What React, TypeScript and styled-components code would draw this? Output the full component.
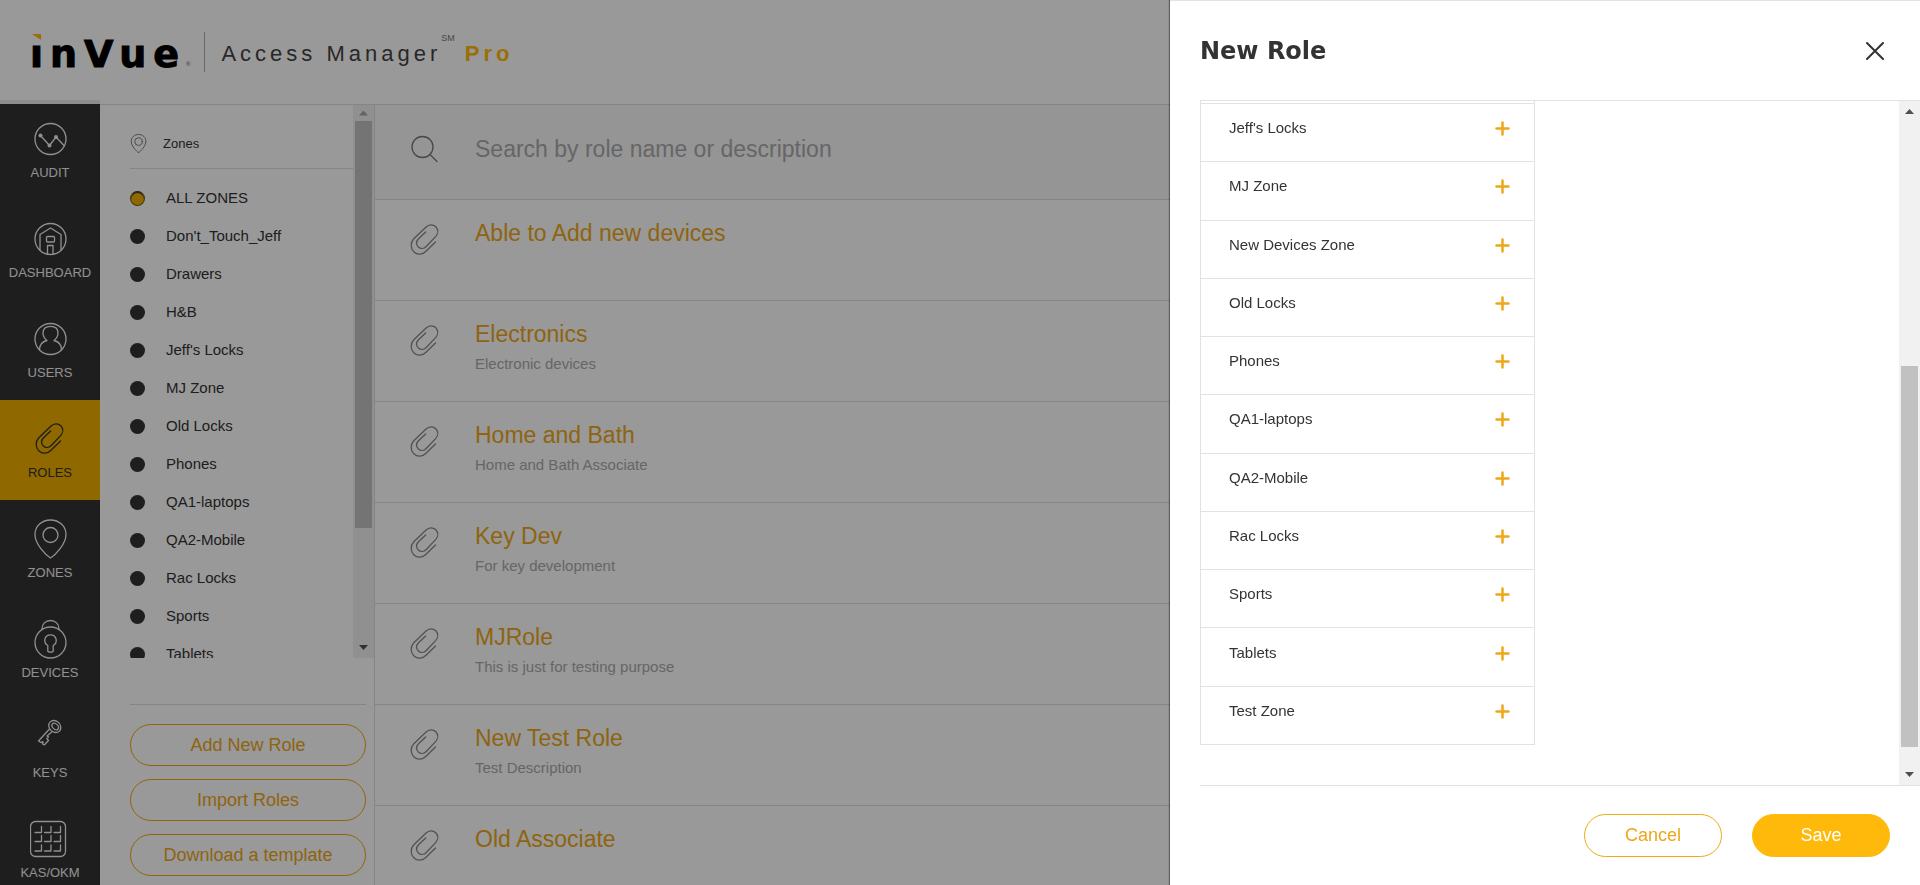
import React from "react";
import styled, { createGlobalStyle, css } from "styled-components";

const GlobalStyle = createGlobalStyle`
  *, *::before, *::after { box-sizing: border-box; }
  html, body, #root { height: 100%; }
  body {
    margin: 0;
    overflow: hidden;
    background: #fff;
    color: #333;
    font-family: "Liberation Sans", Arial, sans-serif;
    font-size: 15px;
  }
  button, input { font-family: inherit; }
  h1, h2, p, ul { margin: 0; padding: 0; }
  ul { list-style: none; }
`;

const GOLD = "#eda719";
const LINE = "#dedede";

/* ---------- page shell ---------- */

const Page = styled.div`
  display: flex;
  flex-direction: column;
  height: 100vh;
`;

const Header = styled.header`
  display: flex;
  align-items: center;
  flex: none;
  height: 104px;
  padding: 0 30px;
  background: linear-gradient(#ebebeb, #ebebeb) left bottom / 100px 4px no-repeat #fff;
`;

const Logo = styled.div`
  display: flex;
  align-items: flex-end;
`;

const Wordmark = styled.div`
  position: relative;
  padding-top: 4px;
  color: #000;
  font: bold 38px/40px "DejaVu Sans", sans-serif;
  letter-spacing: 7px;
  -webkit-text-stroke: 1px #000;

  &::before {
    content: "";
    position: absolute;
    top: 4px;
    left: 2px;
    border-style: solid;
    border-width: 0 9px 6px 0;
    border-color: transparent #ffb90a transparent transparent;
  }
`;

const Registered = styled.span`
  padding-bottom: 6px;
  color: #555;
  font-size: 6px;
  line-height: 8px;
`;

const Divider = styled.div`
  width: 1px;
  height: 40px;
  margin: 0 16px 0 14px;
  background: #aaa;
`;

const Product = styled.div`
  display: flex;
  align-items: flex-start;
  padding-top: 4px;
  color: #444;
  font-size: 22px;
  line-height: 28px;
  letter-spacing: 4px;
`;

const ServiceMark = styled.sup`
  margin: -6px 10px 0 0;
  color: #777;
  font-size: 9px;
  line-height: 8px;
  letter-spacing: 0;
`;

const Pro = styled.b`
  color: #ffb90a;
`;

const Columns = styled.div`
  display: flex;
  flex: 1;
  min-height: 0;
`;

/* ---------- main navigation ---------- */

const Nav = styled.nav`
  flex: none;
  width: 100px;
  overflow: hidden;
  background: #333;
`;

const NavItem = styled.a<{ $active?: boolean }>`
  display: flex;
  flex-direction: column;
  align-items: center;
  justify-content: flex-end;
  gap: 6px;
  height: 100px;
  padding-bottom: 19px;
  color: ${(p) => (p.$active ? "#333" : "#f0f0f0")};
  background: ${(p) => (p.$active ? "#eead00" : "transparent")};
  font-size: 13px;
  line-height: 16px;
  text-decoration: none;

  &:first-child { height: 96px; }
`;

const Icon = styled.svg<{ $size?: number }>`
  flex: none;
  width: ${(p) => p.$size ?? 40}px;
  height: ${(p) => p.$size ?? 40}px;
  fill: none;
  stroke: currentColor;
  stroke-linecap: round;
  stroke-linejoin: round;
`;

/* ---------- zone filter ---------- */

const Sidebar = styled.aside`
  display: flex;
  flex-direction: column;
  flex: none;
  width: 275px;
  border-top: 1px solid ${LINE};
  border-right: 1px solid ${LINE};
`;

const ZoneScroll = styled.div`
  display: flex;
  flex: 1;
  min-height: 0;
  overflow: hidden;
`;

const ZonePane = styled.div`
  flex: 1;
  padding-left: 30px;
`;

const ZoneHeading = styled.h2`
  display: flex;
  align-items: center;
  gap: 14px;
  height: 64px;
  padding-top: 14px;
  border-bottom: 1px solid ${LINE};
  font-size: 13px;
  font-weight: normal;

  svg { color: #777; }
`;

const ZoneOptions = styled.div`
  padding-top: 10px;
`;

const ZoneLabel = styled.label`
  display: flex;
  align-items: center;
  gap: 21px;
  height: 38px;
`;

const ItemText = styled.span`
  padding-bottom: 2px;
`;

const ZoneRadio = styled.input`
  appearance: none;
  width: 15px;
  height: 15px;
  margin: 0;
  border-radius: 50%;
  background: #333;

  &:checked {
    background: #eead00;
    box-shadow: inset 0 1px 0 #333;
    border: 1px solid #7a5c10;
    border-top-color: #333;
  }
`;

const SidebarActions = styled.div`
  display: flex;
  flex-direction: column;
  flex: none;
  gap: 13px;
  margin: 46px 8px 0 30px;
  padding: 19px 0 9px;
  border-top: 1px solid ${LINE};
`;

const PillButton = styled.button<{ $filled?: boolean; $large?: boolean }>`
  height: 42px;
  border: 1px solid #edab10;
  border-radius: 21px;
  padding: 0;
  background: transparent;
  color: ${GOLD};
  font-size: 18px;
  line-height: 20px;

  ${(p) => p.$large && css`
    width: 138px;
    height: 43px;
    padding-bottom: 2px;
    border-radius: 22px;
  `}
  ${(p) => p.$filled && css`
    border-color: #ffb90a;
    background: #ffb90a;
    color: #fff;
  `}
`;

/* ---------- scroll bar ---------- */

const Track = styled.div`
  display: flex;
  flex-direction: column;
  align-items: center;
  flex: none;
  width: 21px;
  background: #f1f1f1;
`;

const ArrowBox = styled.div<{ $down?: boolean; $muted?: boolean; $short?: boolean }>`
  display: flex;
  align-items: center;
  flex: none;
  height: ${(p) => (p.$short ? 16 : 21)}px;

  &::before {
    content: "";
    width: 9px;
    height: 5px;
    background: ${(p) => (p.$muted ? "#a3a3a3" : "#505050")};
    clip-path: ${(p) =>
      p.$down ? "polygon(0 0, 100% 0, 50% 100%)" : "polygon(50% 0, 100% 100%, 0 100%)"};
  }
`;

const TrackPart = styled.div<{ $share: number; $thumb?: boolean }>`
  flex: ${(p) => p.$share} 1 0;
  width: 17px;
  background: ${(p) => (p.$thumb ? "#c1c1c1" : "transparent")};
`;

type ScrollBarProps = { before: number; thumb: number; after: number; atTop?: boolean };

const ScrollBar = ({ before, thumb, after, atTop }: ScrollBarProps) => (
  <Track aria-hidden="true">
    <ArrowBox $muted={atTop} $short={atTop} />
    <TrackPart $share={before} />
    <TrackPart $share={thumb} $thumb />
    <TrackPart $share={after} />
    <ArrowBox $down />
  </Track>
);

/* ---------- role list ---------- */

const Main = styled.main`
  flex: 1;
  min-width: 0;
  overflow: hidden;
  border-top: 1px solid ${LINE};
`;

const SearchRow = styled.label`
  display: flex;
  align-items: center;
  gap: 30px;
  height: 95px;
  padding: 0 30px 6px;
  border-bottom: 1px solid ${LINE};
  background: #f9f9f9;

  svg { color: #777; }
`;

const SearchInput = styled.input`
  flex: 1;
  height: 40px;
  border: 0;
  padding: 0;
  background: transparent;
  color: #333;
  font-size: 23px;
  outline: none;

  &::placeholder { color: #aaa; opacity: 1; }
`;

const RoleRow = styled.li`
  display: flex;
  align-items: flex-start;
  gap: 30px;
  height: 101px;
  padding: 19px 30px 0;
  border-bottom: 1px solid ${LINE};

  svg {
    margin-top: 1px;
    color: #888;
  }
`;

const RoleName = styled.a`
  display: block;
  color: ${GOLD};
  font-size: 23px;
  line-height: 28px;
  text-decoration: none;
`;

const RoleNote = styled.p`
  margin-top: 6px;
  color: #aaa;
  font-size: 15px;
  line-height: 20px;
`;

/* ---------- drawer ---------- */

const Backdrop = styled.div`
  position: fixed;
  inset: 0;
  display: flex;
  justify-content: flex-end;
  background: rgba(0, 0, 0, 0.4);
`;

const Drawer = styled.section`
  display: flex;
  flex-direction: column;
  width: 750px;
  max-width: 100%;
  height: 100%;
  border-top: 1px solid #e2e2e2;
  background: #fff;
  box-shadow: -1px 0 1px rgba(0, 0, 0, 0.4);
`;

const DrawerHeader = styled.header`
  display: flex;
  align-items: center;
  justify-content: space-between;
  flex: none;
  height: 100px;
  margin-left: 30px;
  padding-right: 36px;
  border-bottom: 1px solid #e2e2e2;
`;

const DrawerTitle = styled.h1`
  font: bold 24px/30px "Arial Black", "DejaVu Sans", sans-serif;
`;

const IconButton = styled.button`
  display: flex;
  border: 0;
  padding: 0;
  background: transparent;
  color: ${GOLD};
`;

const CloseButton = styled(IconButton)`
  color: #333;
`;

const DrawerBody = styled.div`
  display: flex;
  justify-content: space-between;
  flex: 1;
  min-height: 0;
  margin-left: 30px;
`;

const PickList = styled.ul`
  display: flex;
  flex-direction: column;
  width: 335px;
  margin-bottom: 40px;
  padding-top: 2px;
  border: solid #e2e2e2;
  border-width: 0 1px 1px;
`;

const PickItem = styled.li`
  display: flex;
  align-items: center;
  justify-content: space-between;
  flex: 1;
  padding: 0 24px 8px 28px;
  border-top: 1px solid #e2e2e2;
`;

const DrawerFooter = styled.footer`
  display: flex;
  align-items: center;
  justify-content: flex-end;
  flex: none;
  gap: 30px;
  height: 100px;
  margin-left: 30px;
  padding-right: 30px;
  border-top: 1px solid #e2e2e2;
`;

/* ---------- icons ---------- */

const PIN = "M20 39C15 36 4.500 25 4.500 15.500C4.500 7 11.500 1 20 1S35.500 7 35.500 15.500C35.500 25 25 36 20 39Z";

const LineIcon = ({ children }: { children: React.ReactNode }) => (
  <Icon viewBox="0 0 40 40" strokeWidth="1.3" aria-hidden="true">
    {children}
  </Icon>
);

const Clip = () => (
  <LineIcon>
    <path d="M30.500 22L21 31.200C17.500 34.800 12.500 35.200 9 32C5.300 28.500 5.300 22.500 8.800 18.800L20.800 7.200C24 4.200 28.200 4.200 30.800 6.800C33.400 9.500 33.400 13.500 30.600 16.600L21.500 26.200C18.800 29 15.500 29 13.400 27C11 24.600 11 21.500 13.500 18.700L20.700 12" />
  </LineIcon>
);

const navItems: { label: string; active?: boolean; icon: React.ReactNode }[] = [
  {
    label: "AUDIT",
    icon: (
      <LineIcon>
        <circle cx="20.500" cy="20" r="15.500" />
        <path d="M10.500 16.500L19.500 26.500L26 18L34 26.500" />
        <g fill="currentColor" stroke="none">
          <circle cx="10.500" cy="16.500" r="2" />
          <circle cx="19.500" cy="26.500" r="2" />
          <circle cx="26" cy="18" r="2" />
        </g>
      </LineIcon>
    ),
  },
  {
    label: "DASHBOARD",
    icon: (
      <LineIcon>
        <circle cx="20.500" cy="20" r="15.500" />
        <path d="M10 31V15.500L20.500 9L31 15.500V31M17.500 35V26.500H23V35" />
        <rect x="16.500" y="17.500" width="8" height="5.500" rx="1" />
      </LineIcon>
    ),
  },
  {
    label: "USERS",
    icon: (
      <LineIcon>
        <circle cx="20.500" cy="20" r="15.500" />
        <path d="M9.500 31C9.500 25.500 12.500 22.500 17 21.500C14.300 19.500 13 17 13 14C13 9.500 16 7.300 20.500 7.300S28 9.500 28 14C28 17 26.700 19.500 24 21.500C28.500 22.500 31.500 25.500 31.500 31" />
      </LineIcon>
    ),
  },
  { label: "ROLES", active: true, icon: <Clip /> },
  {
    label: "ZONES",
    icon: (
      <LineIcon>
        <path d={PIN} transform="translate(0.500 0)" />
        <circle cx="20.500" cy="16" r="7.500" />
      </LineIcon>
    ),
  },
  {
    label: "DEVICES",
    icon: (
      <LineIcon>
        <circle cx="20.500" cy="23.500" r="15.500" />
        <path d="M12 10C12 5 15.500 1.500 20.500 1.500S29 5 29 10M17.800 26.500C13 24 14 15.800 20.500 15.800S28 24 23.200 26.500V32C23.200 33.500 17.800 33.500 17.800 32Z" />
      </LineIcon>
    ),
  },
  {
    label: "KEYS",
    icon: (
      <LineIcon>
        <ellipse cx="24.800" cy="7.500" rx="6.500" ry="5.500" transform="rotate(45 24.800 7.500)" />
        <ellipse cx="25.200" cy="7.500" rx="3.800" ry="2.600" transform="rotate(45 25.200 7.500)" />
        <path d="M19 10.500L8.500 22L11 23.500L13 22.500L12.500 25L14.500 25.800L18.500 21.500L16.800 19.500L18.500 18L17 17L22 12.800" />
      </LineIcon>
    ),
  },
  {
    label: "KAS/OKM",
    icon: (
      <LineIcon>
        <rect x="0.500" y="2.500" width="35" height="35" rx="5" />
        <path d="M5 13.500H11.500V7.500M14.500 13.500H21V7.500M24 13.500H30.500V7.500M5 22.500H11.500V16.500M14.500 22.500H21V16.500M24 22.500H30.500V16.500M5 32H11.500V26M14.500 32H21V26M24 32H30.500V26" />
      </LineIcon>
    ),
  },
];

/* ---------- data ---------- */

const zones = [
  "ALL ZONES", "Don't_Touch_Jeff", "Drawers", "H&B", "Jeff's Locks", "MJ Zone", "Old Locks",
  "Phones", "QA1-laptops", "QA2-Mobile", "Rac Locks", "Sports", "Tablets",
];

const roles: { name: string; note?: string }[] = [
  { name: "Able to Add new devices" },
  { name: "Electronics", note: "Electronic devices" },
  { name: "Home and Bath", note: "Home and Bath Associate" },
  { name: "Key Dev", note: "For key development" },
  { name: "MJRole", note: "This is just for testing purpose" },
  { name: "New Test Role", note: "Test Description" },
  { name: "Old Associate" },
];

const availableZones = [
  "Jeff's Locks", "MJ Zone", "New Devices Zone", "Old Locks", "Phones", "QA1-laptops",
  "QA2-Mobile", "Rac Locks", "Sports", "Tablets", "Test Zone",
];

export default function App() {
  return (
    <>
      <GlobalStyle />
      <Page>
        <Header>
          <Logo>
            <Wordmark>ınVue</Wordmark>
            <Registered>®</Registered>
          </Logo>
          <Divider />
          <Product>
            Access Manager
            <ServiceMark>SM</ServiceMark>
            <Pro>Pro</Pro>
          </Product>
        </Header>
        <Columns>
          <Nav>
            {navItems.map((item) => (
              <NavItem key={item.label} href="#" $active={item.active}>
                {item.icon}
                {item.label}
              </NavItem>
            ))}
          </Nav>
          <Sidebar>
            <ZoneScroll>
              <ZonePane>
                <ZoneHeading>
                  <Icon $size={19} viewBox="2 0 40 40" strokeWidth="2" aria-hidden="true">
                    <path d={PIN} />
                    <circle cx="20" cy="16" r="8" />
                  </Icon>
                  Zones
                </ZoneHeading>
                <ZoneOptions>
                  {zones.map((zone, i) => (
                    <ZoneLabel key={zone}>
                      <ZoneRadio type="radio" name="zone" defaultChecked={i === 0} />
                      <ItemText>{zone}</ItemText>
                    </ZoneLabel>
                  ))}
                </ZoneOptions>
              </ZonePane>
              <ScrollBar before={0} thumb={407} after={109} atTop />
            </ZoneScroll>
            <SidebarActions>
              <PillButton type="button">Add New Role</PillButton>
              <PillButton type="button">Import Roles</PillButton>
              <PillButton type="button">Download a template</PillButton>
            </SidebarActions>
          </Sidebar>
          <Main>
            <SearchRow>
              <LineIcon>
                <circle cx="17.500" cy="18" r="10.500" />
                <path d="M25 25.500L32 32.500" />
              </LineIcon>
              <SearchInput
                type="search"
                aria-label="Search roles"
                placeholder="Search by role name or description"
              />
            </SearchRow>
            <ul>
              {roles.map((role) => (
                <RoleRow key={role.name}>
                  <Clip />
                  <div>
                    <RoleName href="#">{role.name}</RoleName>
                    {role.note && <RoleNote>{role.note}</RoleNote>}
                  </div>
                </RoleRow>
              ))}
            </ul>
          </Main>
        </Columns>
      </Page>
      <Backdrop>
        <Drawer role="dialog" aria-labelledby="drawer-title">
          <DrawerHeader>
            <DrawerTitle id="drawer-title">New Role</DrawerTitle>
            <CloseButton type="button" aria-label="Close">
              <Icon $size={18} viewBox="0 0 18 18" strokeWidth="2">
                <path d="M1 1L17 17M17 1L1 17" />
              </Icon>
            </CloseButton>
          </DrawerHeader>
          <DrawerBody>
            <PickList>
              {availableZones.map((zone) => (
                <PickItem key={zone}>
                  <ItemText>{zone}</ItemText>
                  <IconButton type="button" aria-label={`Add ${zone}`}>
                    <Icon $size={15} viewBox="0 0 15 15" strokeWidth="2.5">
                      <path d="M7.500 1.500V13.500M1.500 7.500H13.500" />
                    </Icon>
                  </IconButton>
                </PickItem>
              ))}
            </PickList>
            <ScrollBar before={244} thumb={381} after={17} />
          </DrawerBody>
          <DrawerFooter>
            <PillButton type="button" $large>Cancel</PillButton>
            <PillButton type="button" $large $filled>Save</PillButton>
          </DrawerFooter>
        </Drawer>
      </Backdrop>
    </>
  );
}
